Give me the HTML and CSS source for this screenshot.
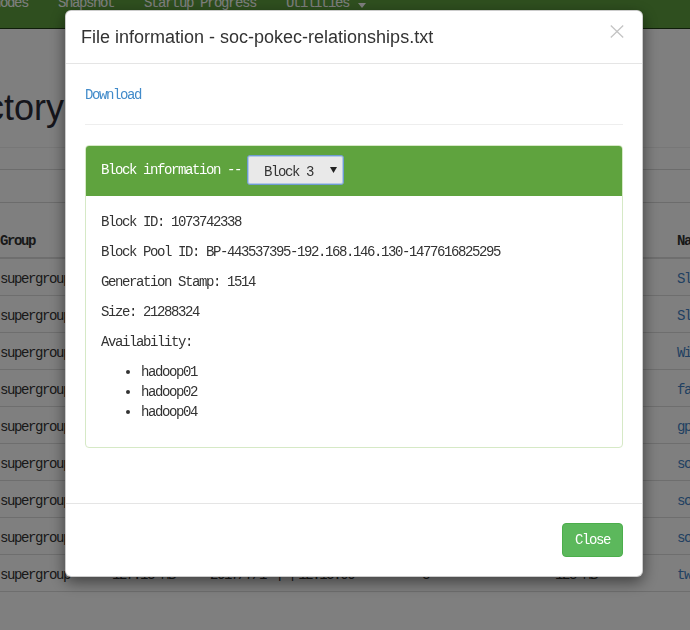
FILE: index.html
```html
<!DOCTYPE html>
<html>
<head>
<meta charset="utf-8">
<title>Browse Directory</title>
<link rel="stylesheet" href="styles.css">
</head>
<body>
<div class="page">
  <nav class="navbar">
    <ul class="nav">
      <li>Datanodes</li>
      <li>Snapshot</li>
      <li>Startup Progress</li>
      <li>Utilities<span class="caret"></span></li>
    </ul>
  </nav>
  <div class="page-header">
    <div class="title-wrap"><h1>Browse Directory</h1></div>
  </div>
  <div class="bar bar1"></div>
  <div class="bar bar2"></div>
  <div class="table">
    <div class="tr thead"><div>Group</div><div>Size</div><div>Last Modified</div><div>Replication</div><div>Block Size</div><div>Name</div></div>
    <div class="tr"><div>supergroup</div><div>10.46 MB</div><div>2017/7/1 下午12:10:21</div><div>3</div><div>128 MB</div><div><a>Slashdot0811.txt</a></div></div>
    <div class="tr"><div>supergroup</div><div>10.82 MB</div><div>2017/7/1 下午12:10:24</div><div>3</div><div>128 MB</div><div><a>Slashdot0902.txt</a></div></div>
    <div class="tr"><div>supergroup</div><div>1.03 MB</div><div>2017/7/1 下午12:10:27</div><div>3</div><div>128 MB</div><div><a>Wiki-Vote.txt</a></div></div>
    <div class="tr"><div>supergroup</div><div>835.55 KB</div><div>2017/7/1 下午12:10:30</div><div>3</div><div>128 MB</div><div><a>facebook_combined.txt</a></div></div>
    <div class="tr"><div>supergroup</div><div>379.06 MB</div><div>2017/7/1 下午12:11:02</div><div>3</div><div>128 MB</div><div><a>gplus_combined.txt</a></div></div>
    <div class="tr"><div>supergroup</div><div>5.26 MB</div><div>2017/7/1 下午12:11:05</div><div>3</div><div>128 MB</div><div><a>soc-Epinions1.txt</a></div></div>
    <div class="tr"><div>supergroup</div><div>1.01 GB</div><div>2017/7/1 下午12:13:40</div><div>3</div><div>128 MB</div><div><a>soc-LiveJournal1.txt</a></div></div>
    <div class="tr"><div>supergroup</div><div>404.2 MB</div><div>2017/7/1 下午12:14:31</div><div>3</div><div>128 MB</div><div><a>soc-pokec-relationships.txt</a></div></div>
    <div class="tr"><div>supergroup</div><div>127.13 MB</div><div>2017/7/1 下午12:15:00</div><div>3</div><div>128 MB</div><div><a>twitter_combined.txt</a></div></div>
  </div>
</div>

<div class="backdrop"></div>

<div class="modal">
  <div class="modal-header">
    <h4 class="modal-title">File information - soc-pokec-relationships.txt</h4>
    <svg class="close" width="14" height="13" viewBox="0 0 14 13" aria-label="Close">
      <line x1="0.8" y1="0.5" x2="13.2" y2="12.5" stroke="#c4c4c4" stroke-width="1.3"/>
      <line x1="13.2" y1="0.5" x2="0.8" y2="12.5" stroke="#c4c4c4" stroke-width="1.3"/>
    </svg>
  </div>
  <div class="modal-body">
    <div class="download"><a>Download</a></div>
    <hr class="sep">
    <div class="panel">
      <div class="panel-heading">
        <span>Block information --</span>
        <div class="select" role="listbox">
          <span class="select-text">Block 3</span>
          <svg class="select-arrow" width="7" height="6" viewBox="0 0 7 6"><polygon points="0,0 7,0 3.5,6" fill="#222"/></svg>
        </div>
      </div>
      <div class="panel-body">
        <p>Block ID: 1073742338</p>
        <p>Block Pool ID: BP-443537395-192.168.146.130-1477616825295</p>
        <p>Generation Stamp: 1514</p>
        <p>Size: 21288324</p>
        <p>Availability:</p>
        <ul>
          <li>hadoop01</li>
          <li>hadoop02</li>
          <li>hadoop04</li>
        </ul>
      </div>
    </div>
  </div>
  <div class="modal-footer">
    <button class="btn-close">Close</button>
  </div>
</div>
</body>
</html>
```

FILE: styles.css
```css
html, body {
  margin: 0;
  padding: 0;
}
body {
  width: 690px;
  height: 630px;
  overflow: hidden;
  background: #fff;
  color: #333;
  font-family: "Liberation Mono", "Noto Sans CJK SC", monospace;
  font-size: 14px;
  letter-spacing: -1.4px;
  line-height: 20px;
}

/* ---------- background page ---------- */
.navbar {
  height: 28px;
  background: #5e9f3e;
  border-bottom: 1px solid #1f3a14;
  overflow: hidden;
}
.nav {
  display: flex;
  list-style: none;
  margin: 0 0 0 -50px;
  padding: 0;
}
.nav li {
  padding: 0 15px;
  line-height: 6px;
  color: #fff;
  white-space: nowrap;
}
.caret {
  display: inline-block;
  width: 0;
  height: 0;
  margin-left: 9px;
  vertical-align: -1px;
  border-top: 5px solid #fff;
  border-left: 4px solid transparent;
  border-right: 4px solid transparent;
}
.page-header {
  padding: 59px 0 19px;
  border-bottom: 1px solid #eee;
}
.title-wrap {
  width: 64px;
  display: flex;
  justify-content: flex-end;
  white-space: nowrap;
}
.title-wrap h1 {
  margin: 0;
  font-family: "Liberation Sans", Arial, sans-serif;
  font-size: 36px;
  line-height: 40px;
  font-weight: normal;
  letter-spacing: 0;
  color: #2a2a36;
}
.bar {
  border-bottom: 1px solid #d8d8d8;
}
.bar1 { height: 21px; }
.bar2 { height: 32px; }

.tr {
  display: grid;
  grid-template-columns: 112px 98px 212px 133px 122px minmax(0, 1fr);
  padding: 10px 0 6px;
  border-bottom: 1px solid #ddd;
  white-space: nowrap;
}
.thead {
  padding: 28px 0 6px;
  border-bottom: 2px solid #ddd;
  font-weight: bold;
}
.tr a {
  color: #4281c4;
  text-decoration: none;
}

/* ---------- overlay ---------- */
.backdrop {
  position: fixed;
  left: 0;
  top: 0;
  right: 0;
  bottom: 0;
  background: rgba(0, 0, 0, 0.5);
}

.modal {
  position: fixed;
  left: 65px;
  top: 10px;
  width: 578px;
  box-sizing: border-box;
  background: #fff;
  border: 1px solid rgba(0, 0, 0, 0.2);
  border-radius: 6px;
  box-shadow: 0 5px 15px rgba(0, 0, 0, 0.5);
}
.modal-header {
  display: flex;
  justify-content: space-between;
  align-items: flex-start;
  padding: 14px 15px;
  border-bottom: 1px solid #e5e5e5;
}
.modal-title {
  margin: 0;
  font-family: "Liberation Sans", Arial, sans-serif;
  font-size: 18px;
  line-height: 24px;
  font-weight: normal;
  letter-spacing: 0;
  color: #333;
}
.close {
  display: block;
  margin-right: 3px;
}
.modal-body {
  padding: 20px 19px;
}
.download {
  padding-top: 1px;
}
.download a {
  color: #428bca;
  text-decoration: none;
}
.sep {
  margin: 19px 0 20px;
  border: 0;
  border-top: 1px solid #eee;
  height: 0;
}
.panel {
  border: 1px solid #d6e9c6;
  border-radius: 4px;
  margin-bottom: 35px;
}
.panel-heading {
  display: flex;
  align-items: center;
  padding: 9px 15px 11px;
  background: #5fa33e;
  color: #fff;
  border-radius: 3px 3px 0 0;
  white-space: nowrap;
}
.select {
  display: flex;
  align-items: center;
  box-sizing: border-box;
  width: 97px;
  height: 30px;
  margin-left: 6px;
  padding: 0 5px 0 16px;
  background: #e9e9e9;
  border: 1px solid #6f9bd1;
  border-radius: 3px;
  box-shadow: inset 0 0 0 1px #b3c9e6;
  color: #333;
}
.select-text {
  padding-top: 3px;
}
.select-arrow {
  display: block;
  margin-left: auto;
  margin-right: 1px;
}
.panel-body {
  padding: 16px 15px 15px;
}
.panel-body p {
  margin: 0 0 10px;
}
.panel-body ul {
  margin: 0 0 10px;
  padding-left: 40px;
}
.modal-footer {
  display: flex;
  justify-content: flex-end;
  padding: 19px;
  border-top: 1px solid #e5e5e5;
}
.btn-close {
  font-family: "Liberation Mono", monospace;
  font-size: 14px;
  letter-spacing: -1.4px;
  line-height: 20px;
  padding: 6px 12px;
  color: #fff;
  background: #5cb85c;
  border: 1px solid #4cae4c;
  border-radius: 4px;
}
```
